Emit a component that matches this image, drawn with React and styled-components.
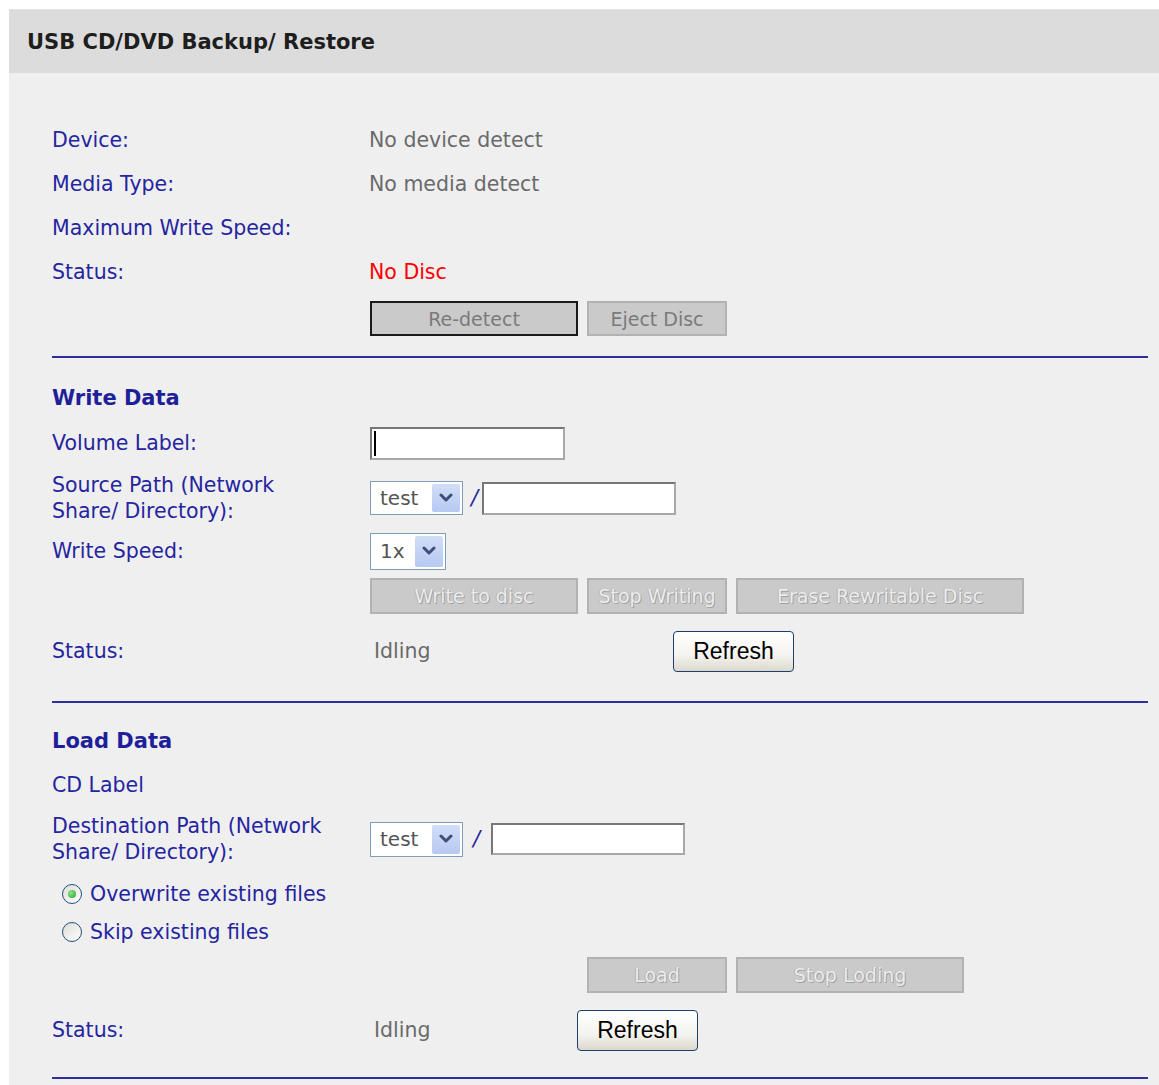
import React from 'react';
import styled, { createGlobalStyle } from 'styled-components';

const GlobalStyle = createGlobalStyle`
    html, body {
        margin: 0;
        padding: 0;
        background: #ffffff;
    }

    body {
        font-family: "DejaVu Sans", Verdana, sans-serif;
    }
`

const Chevron = () => (
    <svg width='14' height='10' viewBox='0 0 14 10'>
        <path d='M2 2 L7 7 L12 2' fill='none' stroke='#3c4f78' strokeWidth='3' strokeLinecap='round' strokeLinejoin='round' />
    </svg>
)

const Select = ({ value, width, height }) => (
    <SelectBox $width={width} $height={height}>
        <span className='select-value'>{value}</span>
        <span className='select-arrow'><Chevron /></span>
    </SelectBox>
)

const Radio = ({ checked, label, top }) => (
    <RadioRow $top={top}>
        <RadioCircle $checked={checked} />
        <span>{label}</span>
    </RadioRow>
)

const App = () => {
    return (
        <>
            <GlobalStyle />
            <Page>
                <Panel>
                    <Header>USB CD/DVD Backup/ Restore</Header>
                    <Content>
                        <Row $height={44}>
                            <Label>Device:</Label>
                            <Value>No device detect</Value>
                        </Row>
                        <Row $height={44}>
                            <Label>Media Type:</Label>
                            <Value>No media detect</Value>
                        </Row>
                        <Row $height={44}>
                            <Label>Maximum Write Speed:</Label>
                            <Value />
                        </Row>
                        <Row $height={44}>
                            <Label>Status:</Label>
                            <Value $alert>No Disc</Value>
                        </Row>
                        <ButtonRow $top={7}>
                            <FlatButton $width={208} $height={35} $default>Re-detect</FlatButton>
                            <FlatButton $width={140} $height={35}>Eject Disc</FlatButton>
                        </ButtonRow>
                        <Divider $top={20} />

                        <Row $height={44} $top={18}>
                            <SectionTitle>Write Data</SectionTitle>
                        </Row>
                        <Row $height={46}>
                            <Label>Volume Label:</Label>
                            <Field>
                                <InputWrap>
                                    <TextInput $width={195} $height={33} />
                                    <Caret />
                                </InputWrap>
                            </Field>
                        </Row>
                        <Row $height={64}>
                            <Label>Source Path (Network<br />Share/ Directory):</Label>
                            <Field>
                                <Select value='test' width={93} height={34} />
                                <Slash $left={8} $right={4}>/</Slash>
                                <TextInput $width={194} $height={33} />
                            </Field>
                        </Row>
                        <Row $height={42}>
                            <Label>Write Speed:</Label>
                            <Field>
                                <Select value='1x' width={76} height={37} />
                            </Field>
                        </Row>
                        <ButtonRow $top={6}>
                            <FlatButton $width={208} $height={36} disabled>Write to disc</FlatButton>
                            <FlatButton $width={140} $height={36} disabled>Stop Writing</FlatButton>
                            <FlatButton $width={288} $height={36} disabled>Erase Rewritable Disc</FlatButton>
                        </ButtonRow>
                        <Row $height={46} $top={14}>
                            <Label>Status:</Label>
                            <Field>
                                <StatusText $width={299}>Idling</StatusText>
                                <RefreshButton>Refresh</RefreshButton>
                            </Field>
                        </Row>
                        <Divider $top={27} />

                        <Row $height={44} $top={16}>
                            <SectionTitle>Load Data</SectionTitle>
                        </Row>
                        <Row $height={44}>
                            <Label>CD Label</Label>
                            <Value />
                        </Row>
                        <Row $height={64}>
                            <Label>Destination Path (Network<br />Share/ Directory):</Label>
                            <Field>
                                <Select value='test' width={93} height={35} />
                                <Slash $left={10} $right={11}>/</Slash>
                                <TextInput $width={194} $height={32} />
                            </Field>
                        </Row>
                        <Radio checked top={4} label='Overwrite existing files' />
                        <Radio label='Skip existing files' />
                        <ButtonRow $top={6} $offset={217}>
                            <FlatButton $width={140} $height={36} disabled>Load</FlatButton>
                            <FlatButton $width={228} $height={36} disabled>Stop Loding</FlatButton>
                        </ButtonRow>
                        <Row $height={46} $top={14}>
                            <Label>Status:</Label>
                            <Field>
                                <StatusText $width={203}>Idling</StatusText>
                                <RefreshButton>Refresh</RefreshButton>
                            </Field>
                        </Row>
                        <Divider $top={24} />
                    </Content>
                </Panel>
            </Page>
        </>
    );
}

const Page = styled.div`
    padding: 9px 0 0 9px;
`

const Panel = styled.div`
    min-height: calc(100vh - 9px);
    background: #efefef;
`

const Header = styled.div`
    height: 64px;
    display: flex;
    align-items: center;
    padding-left: 18px;
    background: #dcdcdc;
    border-top: 1px solid #e4e4e4;
    box-sizing: border-box;
    color: #1e1e1e;
    font-size: 21px;
    font-weight: bold;
`

const Content = styled.div`
    padding: 45px 11px 20px 43px;
`

const Row = styled.div`
    display: grid;
    grid-template-columns: 317px 1fr;
    align-items: center;
    height: ${props => props.$height}px;
    margin-top: ${props => props.$top || 0}px;
`

const Label = styled.div`
    color: #25259f;
    font-size: 20.5px;
    line-height: 26px;
`

const SectionTitle = styled(Label)`
    font-size: 21px;
    font-weight: bold;
    color: #1f1f9a;
`

const Value = styled.div`
    color: ${props => props.$alert ? '#ff0000' : '#6a6a6a'};
    font-size: 20.5px;
    line-height: 26px;
`

const Field = styled.div`
    display: flex;
    align-items: center;
    padding-left: 1px;
`

const StatusText = styled(Value)`
    width: ${props => props.$width}px;
    padding-left: 4px;
`

const ButtonRow = styled.div`
    display: flex;
    gap: 9px;
    margin-top: ${props => props.$top || 0}px;
    margin-left: ${props => 318 + (props.$offset || 0)}px;
`

const FlatButton = styled.button`
    width: ${props => props.$width}px;
    height: ${props => props.$height}px;
    padding: 0;
    box-sizing: border-box;
    background: #cacaca;
    border: 2px solid ${props => props.$default ? '#1a1a1a' : '#b2b2b2'};
    color: #7a7a7a;
    font-family: "DejaVu Sans", Verdana, sans-serif;
    font-size: 19px;

    &:disabled {
        color: #ececec;
        text-shadow: 1px 1px 0 #a2a2a2, -1px 0 0 #b4b4b4;
    }
`

const RefreshButton = styled.button`
    width: 121px;
    height: 41px;
    padding: 0;
    box-sizing: border-box;
    border: 1px solid #1d3f6e;
    border-radius: 4px;
    background: linear-gradient(#ffffff 0%, #f4f3ee 60%, #dcd8cc 100%);
    color: #000000;
    font-family: "Liberation Sans", Arial, sans-serif;
    font-size: 23px;
`

const InputWrap = styled.div`
    position: relative;
    display: flex;
`

const TextInput = styled.input`
    width: ${props => props.$width}px;
    height: ${props => props.$height}px;
    box-sizing: border-box;
    margin: 0;
    background: #ffffff;
    border: 2px solid #777777;
    border-right-color: #a8a8a8;
    border-bottom-color: #a8a8a8;
    outline: none;
`

const Caret = styled.span`
    position: absolute;
    left: 4px;
    top: 4px;
    width: 2px;
    height: 25px;
    background: #000000;
`

const Slash = styled.span`
    margin: 0 ${props => props.$right}px 0 ${props => props.$left}px;
    color: #25259f;
    font-size: 21px;
    font-style: italic;
`

const SelectBox = styled.div`
    width: ${props => props.$width}px;
    height: ${props => props.$height}px;
    box-sizing: border-box;
    display: flex;
    align-items: center;
    justify-content: space-between;
    padding: 2px 2px 2px 9px;
    background: #ffffff;
    border: 1px solid #7f9db9;

    .select-value {
        color: #555555;
        font-size: 20px;
    }

    .select-arrow {
        width: 28px;
        height: 100%;
        display: flex;
        align-items: center;
        justify-content: center;
        border-radius: 2px;
        background: linear-gradient(#d2def8, #b6c9f2);
    }
`

const RadioRow = styled.div`
    display: flex;
    align-items: center;
    gap: 8px;
    height: 38px;
    margin-top: ${props => props.$top || 0}px;
    padding-left: 10px;
    color: #25259f;
    font-size: 20.5px;
`

const RadioCircle = styled.span`
    position: relative;
    width: 20px;
    height: 20px;
    box-sizing: border-box;
    border-radius: 50%;
    border: 1px solid #1c5180;
    background: linear-gradient(135deg, #dcdcd7, #ffffff);

    &::after {
        content: '';
        display: ${props => props.$checked ? 'block' : 'none'};
        position: absolute;
        left: 5px;
        top: 5px;
        width: 8px;
        height: 8px;
        border-radius: 50%;
        background: radial-gradient(circle at 35% 35%, #8fe38f, #21a121);
    }
`

const Divider = styled.div`
    height: 2px;
    margin-top: ${props => props.$top || 0}px;
    background: #2e2e9c;
`

export default App;
